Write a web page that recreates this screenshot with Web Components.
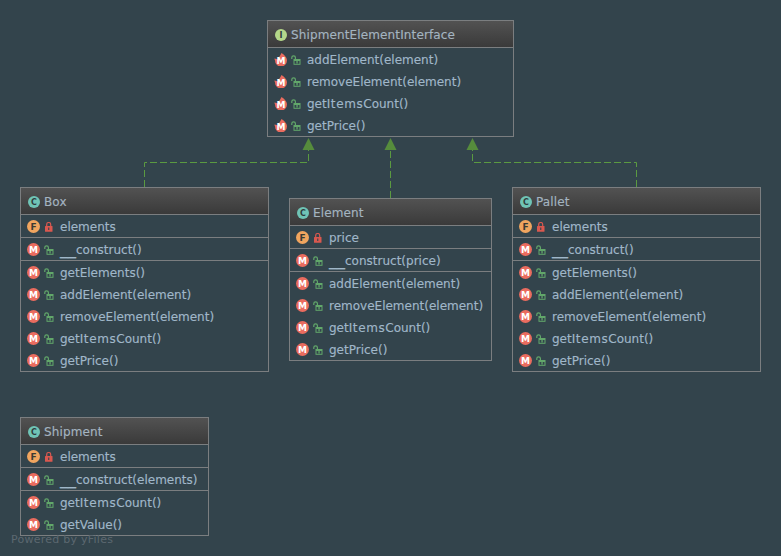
<!DOCTYPE html>
<html>
<head>
<meta charset="utf-8">
<title>Composite</title>
<style>
	html, body {
		margin: 0;
		height: 100%;
		background: #33444c;
	}
</style>
</head>
<body>
<uml-diagram>
	<uml-class name="ShipmentElementInterface" kind="I" style="left:267px;top:20px;width:247px">
		<uml-section>
			<uml-member icon="abstract" label="addElement(element)"></uml-member>
			<uml-member icon="abstract" label="removeElement(element)"></uml-member>
			<uml-member icon="abstract" label="getItemsCount()"></uml-member>
			<uml-member icon="abstract" label="getPrice()"></uml-member>
		</uml-section>
	</uml-class>

	<uml-class name="Box" kind="C" style="left:20px;top:187px;width:249px">
		<uml-section><uml-member icon="field" label="elements"></uml-member></uml-section>
		<uml-section><uml-member icon="method" label="__construct()"></uml-member></uml-section>
		<uml-section>
			<uml-member icon="method" label="getElements()"></uml-member>
			<uml-member icon="method" label="addElement(element)"></uml-member>
			<uml-member icon="method" label="removeElement(element)"></uml-member>
			<uml-member icon="method" label="getItemsCount()"></uml-member>
			<uml-member icon="method" label="getPrice()"></uml-member>
		</uml-section>
	</uml-class>

	<uml-class name="Element" kind="C" style="left:289px;top:198px;width:203px">
		<uml-section><uml-member icon="field" label="price"></uml-member></uml-section>
		<uml-section><uml-member icon="method" label="__construct(price)"></uml-member></uml-section>
		<uml-section>
			<uml-member icon="method" label="addElement(element)"></uml-member>
			<uml-member icon="method" label="removeElement(element)"></uml-member>
			<uml-member icon="method" label="getItemsCount()"></uml-member>
			<uml-member icon="method" label="getPrice()"></uml-member>
		</uml-section>
	</uml-class>

	<uml-class name="Pallet" kind="C" style="left:512px;top:187px;width:249px">
		<uml-section><uml-member icon="field" label="elements"></uml-member></uml-section>
		<uml-section><uml-member icon="method" label="__construct()"></uml-member></uml-section>
		<uml-section>
			<uml-member icon="method" label="getElements()"></uml-member>
			<uml-member icon="method" label="addElement(element)"></uml-member>
			<uml-member icon="method" label="removeElement(element)"></uml-member>
			<uml-member icon="method" label="getItemsCount()"></uml-member>
			<uml-member icon="method" label="getPrice()"></uml-member>
		</uml-section>
	</uml-class>

	<uml-class name="Shipment" kind="C" style="left:20px;top:417px;width:189px">
		<uml-section><uml-member icon="field" label="elements"></uml-member></uml-section>
		<uml-section><uml-member icon="method" label="__construct(elements)"></uml-member></uml-section>
		<uml-section>
			<uml-member icon="method" label="getItemsCount()"></uml-member>
			<uml-member icon="method" label="getValue()"></uml-member>
		</uml-section>
	</uml-class>
</uml-diagram>

<script>
"use strict"

const FONT = `"DejaVu Sans", "Liberation Sans", sans-serif`

const lockOpen = `
	<svg width="10" height="10" viewBox="0 0 10 10">
		<path d="M.8 4V2.600a1.800 1.800 0 0 1 3.600 0V4.500" fill="none" stroke="#62a76a" stroke-width="1.200"/>
		<rect x="2.500" y="4" width="7" height="5.800" fill="#62a76a"/>
		<rect x="3.500" y="6" width="5" height="2.800" fill="#33444c"/>
		<rect x="5.400" y="5.500" width="1.300" height="3" fill="#62a76a"/>
	</svg>`

const lockClosed = `
	<svg width="10" height="10" viewBox="0 0 10 10">
		<path d="M2.700 4.500V2.500a2 2 0 0 1 4 0v2" fill="none" stroke="#d9584f" stroke-width="1.200"/>
		<rect x="1" y="4" width="7.500" height="5.800" rx=".5" fill="#d9584f"/>
		<rect x="4.200" y="5.500" width="1.100" height="2.500" fill="#33444c"/>
	</svg>`

class UmlDiagram extends HTMLElement {
	constructor() {
		super()
		this.attachShadow({ mode: "open" })
	}

	connectedCallback() {
		this.shadowRoot.innerHTML = `
			<style>
				:host {
					display: block;
					position: relative;
					width: 781px;
					height: 556px;
					overflow: hidden;
					background: #33444c;
					font-family: ${FONT};
				}
				svg { position: absolute; left: 0; top: 0; }
				.mark {
					position: absolute;
					left: 11px;
					top: 533px;
					font-size: 11px;
					letter-spacing: .25px;
					color: #5c6870;
				}
			</style>
			<svg width="781" height="556">
				<g fill="none" stroke="#5b9a41" stroke-width="1" stroke-dasharray="7 3">
					<path d="M144.500 187V162.500H308.500V150"/>
					<path d="M390.500 198V150"/>
					<path d="M636.500 187V162.500H472.500V150"/>
				</g>
				<g fill="#568c3c">
					<path d="M308.500 138l6 12h-12z"/>
					<path d="M390.500 138l6 12h-12z"/>
					<path d="M472.500 138l6 12h-12z"/>
				</g>
			</svg>
			<slot></slot>
			<div class="mark">Powered by yFiles</div>
		`
	}
}

class UmlClass extends HTMLElement {
	constructor() {
		super()
		this.attachShadow({ mode: "open" })
	}

	connectedCallback() {
		const kind = this.getAttribute("kind")
		const fill = kind == "I" ? "#b5d88a" : "#6fc4b6"
		this.shadowRoot.innerHTML = `
			<style>
				:host {
					display: block;
					position: absolute;
					box-sizing: border-box;
					border: 1px solid #7b7e80;
				}
				.head {
					display: flex;
					align-items: center;
					gap: 4px;
					box-sizing: border-box;
					height: 26px;
					padding: 1px 0 0 7px;
					background: linear-gradient(#525252, #3a3a3a);
					color: #a4b4c0;
					font-size: 12px;
					letter-spacing: .13px;
					-webkit-text-stroke: .15px;
				}
				svg { display: block; }
				text { font: bold 8px ${FONT}; fill: #2f3b3c; text-anchor: middle; }
			</style>
			<div class="head">
				<svg width="12" height="12" viewBox="0 0 12 12">
					<circle cx="6" cy="6" r="6" fill="${fill}"/>
					<text x="6" y="9">${kind}</text>
				</svg>
				<span>${this.getAttribute("name")}</span>
			</div>
			<slot></slot>
		`
	}
}

class UmlSection extends HTMLElement {
	constructor() {
		super()
		this.attachShadow({ mode: "open" })
		this.shadowRoot.innerHTML = `
			<style>
				:host {
					display: block;
					border-top: 1px solid #7b7e80;
				}
			</style>
			<slot></slot>
		`
	}
}

class UmlMember extends HTMLElement {
	constructor() {
		super()
		this.attachShadow({ mode: "open" })
	}

	getBadge(type) {
		if (type == "field") {
			return `<circle cx="6.500" cy="6.500" r="6.500" fill="#f0a55f"/><text x="6.500" y="9.500" fill="#3a3a33">F</text>`
		}
		if (type == "abstract") {
			return `<path d="M7.500 0c1.500 1 5.500 3.500 5.500 7.500a6 6 0 0 1-12 0c0-.8-.3-1.300-1-1.700 1.700-.4 3 .2 3.600.8C4.500 4.500 6.500 2.500 7.500 0z" fill="#ea6c5f"/><text x="7" y="11" fill="#fff">M</text>`
		}
		return `<circle cx="6.500" cy="6.500" r="6.500" fill="#ea6c5f"/><text x="6.500" y="9.800" fill="#fff">M</text>`
	}

	// the reference font sets underscores and the capital I wider than DejaVu
	getLabel() {
		return this.getAttribute("label")
			.replace("__", `<span class="wide">__</span>`)
			.replace("Items", `<span class="items">Items</span>`)
	}

	connectedCallback() {
		const type = this.getAttribute("icon")
		this.shadowRoot.innerHTML = `
			<style>
				:host {
					display: flex;
					align-items: center;
					box-sizing: border-box;
					height: 22px;
					padding: 1px 0 0 6px;
					color: #a0b7c9;
					font-size: 12px;
					-webkit-text-stroke: .15px;
				}
				svg { display: block; flex: none; }
				.badge { margin-right: 4px; }
				.lock { margin-right: 6px; }
				text { font: bold 9px ${FONT}; text-anchor: middle; -webkit-text-stroke: 0; }
				span { white-space: nowrap; }
				.wide { font-size: 16px; line-height: 0; }
				.items { letter-spacing: .6px; }
			</style>
			<svg class="badge" width="13" height="13" viewBox="0 0 13 13">${this.getBadge(type)}</svg>
			<span class="lock">${type == "field" ? lockClosed : lockOpen}</span>
			<span>${this.getLabel()}</span>
		`
	}
}

window.customElements.define("uml-diagram", UmlDiagram)
window.customElements.define("uml-class", UmlClass)
window.customElements.define("uml-section", UmlSection)
window.customElements.define("uml-member", UmlMember)
</script>
</body>
</html>
